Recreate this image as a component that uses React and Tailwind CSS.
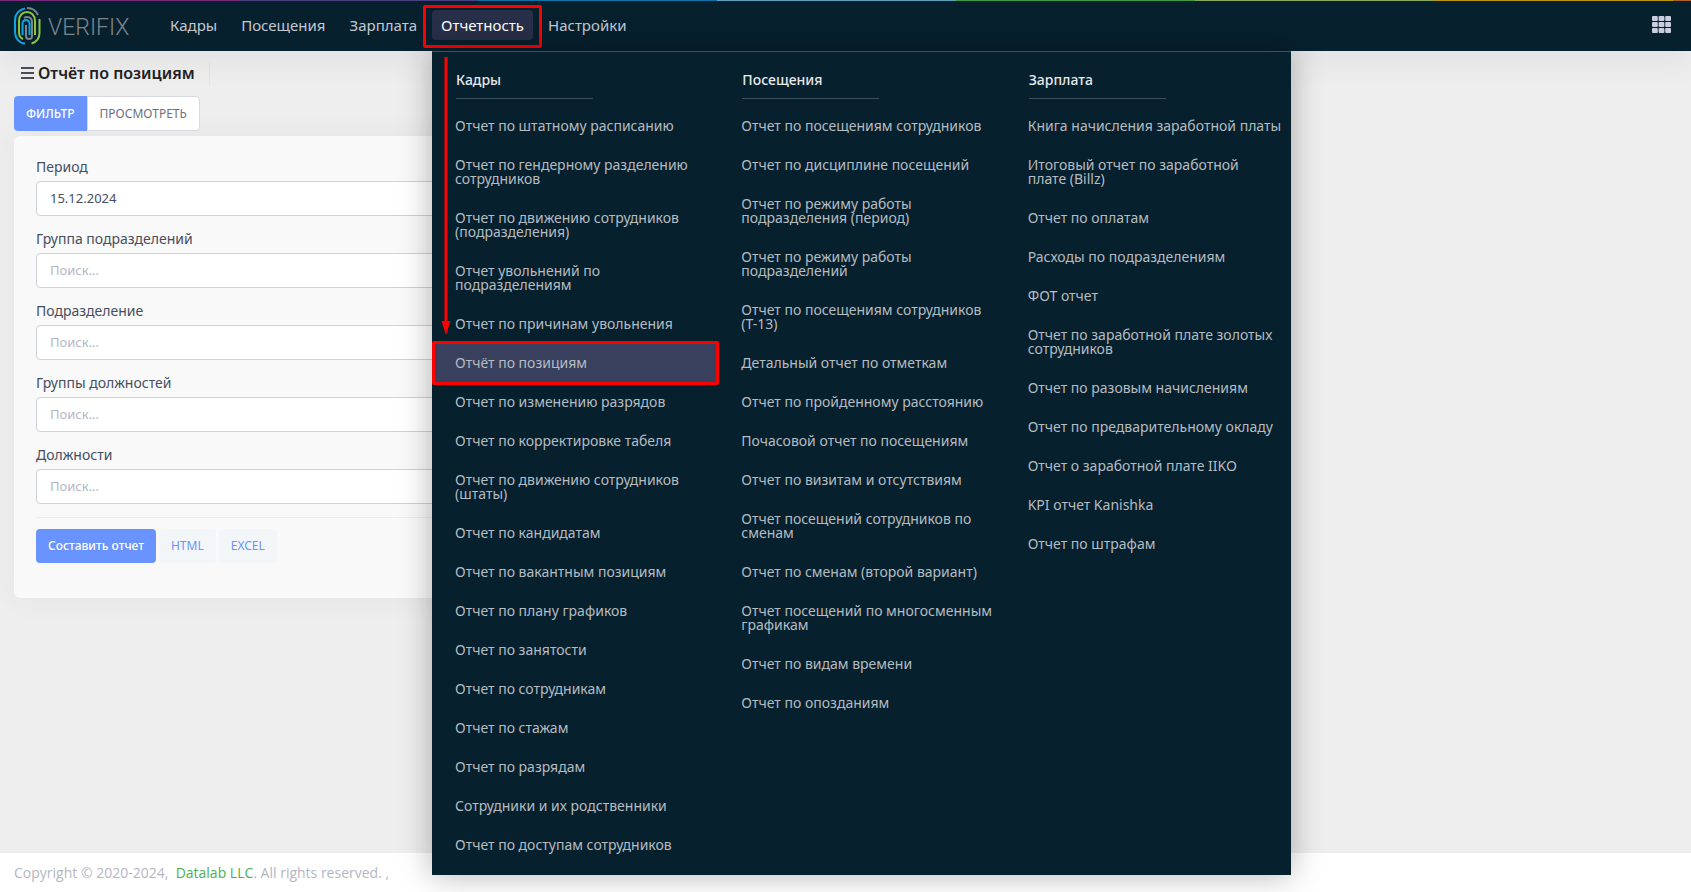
const navItems = ["Кадры", "Посещения", "Зарплата", "Отчетность", "Настройки"];
const activeNav = "Отчетность";

const stripes = [
  "bg-[#7a2a7c]",
  "bg-[#4a4082]",
  "bg-[#0a72a8]",
  "bg-[#5f9fc0]",
  "bg-[#3f9a4a]",
  "bg-[#8aa860]",
  "bg-[#b8960f]",
];

const menuColumns = [
  {
    title: "Кадры",
    items: [
      "Отчет по штатному расписанию",
      "Отчет по гендерному разделению сотрудников",
      "Отчет по движению сотрудников (подразделения)",
      "Отчет увольнений по подразделениям",
      "Отчет по причинам увольнения",
      "Отчёт по позициям",
      "Отчет по изменению разрядов",
      "Отчет по корректировке табеля",
      "Отчет по движению сотрудников (штаты)",
      "Отчет по кандидатам",
      "Отчет по вакантным позициям",
      "Отчет по плану графиков",
      "Отчет по занятости",
      "Отчет по сотрудникам",
      "Отчет по стажам",
      "Отчет по разрядам",
      "Сотрудники и их родственники",
      "Отчет по доступам сотрудников",
    ],
  },
  {
    title: "Посещения",
    items: [
      "Отчет по посещениям сотрудников",
      "Отчет по дисциплине посещений",
      "Отчет по режиму работы подразделения (период)",
      "Отчет по режиму работы подразделений",
      "Отчет по посещениям сотрудников (T-13)",
      "Детальный отчет по отметкам",
      "Отчет по пройденному расстоянию",
      "Почасовой отчет по посещениям",
      "Отчет по визитам и отсутствиям",
      "Отчет посещений сотрудников по сменам",
      "Отчет по сменам (второй вариант)",
      "Отчет посещений по многосменным графикам",
      "Отчет по видам времени",
      "Отчет по опозданиям",
    ],
  },
  {
    title: "Зарплата",
    items: [
      "Книга начисления заработной платы",
      "Итоговый отчет по заработной\nплате (Billz)",
      "Отчет по оплатам",
      "Расходы по подразделениям",
      "ФОТ отчет",
      "Отчет по заработной плате золотых сотрудников",
      "Отчет по разовым начислениям",
      "Отчет по предварительному окладу",
      "Отчет о заработной плате IIKO",
      "KPI отчет Kanishka",
      "Отчет по штрафам",
    ],
  },
];

const fields = [
  { id: "period", label: "Период", value: "15.12.2024" },
  { id: "division-group", label: "Группа подразделений" },
  { id: "division", label: "Подразделение" },
  { id: "job-group", label: "Группы должностей" },
  { id: "job", label: "Должности" },
];

function Logo() {
  return (
    <a href="#" className="flex items-center gap-[7px]" aria-label="Verifix">
      <svg width="27" height="38" viewBox="0 0 27 38" fill="none" strokeWidth="2">
        <g stroke="#0fa5e0">
          <path d="M11 1.5C5 2.500 1 7 1 13v12c0 6 4 11 10 11.500" />
          <path d="M8.500 28V16.500a3.500 3.500 0 0 1 7 0V28" />
        </g>
        <g stroke="#8cc63f">
          <path d="M9 32C6 31 5 28 5 25V14c0-12 16-12 16 0v14" />
          <path d="M25.500 12v14c0 6-3 9-8 10.500" />
        </g>
        <g stroke="#7d858c">
          <path d="M13 1c6 0 9 2.500 11 7" />
          <path d="M12 18v11c0 4 6 4 6 0V15c0-5-5-6-8-4" />
        </g>
      </svg>
      <svg width="86" height="28" viewBox="0 0 86 28" aria-hidden="true">
        <text x="0" y="23" fill="#7d858c" fontFamily="Roboto" fontWeight="300" fontSize="23">
          VERIFIX
        </text>
      </svg>
    </a>
  );
}

function AppsIcon() {
  return (
    <svg width="19" height="17" viewBox="0 0 19 17" fill="#c9cddd">
      {[0, 6, 12].map((y) =>
        [0, 6.6, 13.2].map((x) => (
          <rect key={`${x}-${y}`} x={x} y={y} width="5.8" height="5" rx="1" />
        ))
      )}
    </svg>
  );
}

function BarsIcon() {
  return (
    <svg width="13" height="12" viewBox="0 0 13 12" fill="#4a4d55">
      <rect width="13" height="2" />
      <rect y="5" width="13" height="2" />
      <rect y="10" width="13" height="2" />
    </svg>
  );
}

function ReportsMenu() {
  return (
    <div className="absolute top-full left-0 z-20 mt-[11px] grid w-[859px] grid-cols-3 border-t border-[#3b525e] bg-[#07202e] pt-[17px] pb-[10px] shadow-[0_0_30px_rgba(0,0,0,0.3)]">
      {menuColumns.map((column) => (
        <div key={column.title}>
          <h3 className="mx-6 w-[137px] border-b border-[#3b525e] pb-[7px] text-sm leading-[22px] font-medium text-[#e6e8ea]">
            {column.title}
          </h3>
          <ul className="pt-2">
            {column.items.map((item) => (
              <MenuLink key={item} text={item} />
            ))}
          </ul>
        </div>
      ))}
    </div>
  );
}

function MenuLink({ text }) {
  const selected = text === "Отчёт по позициям";

  return (
    <li className="relative">
      <a
        href="#"
        className={`block pt-3 pr-2 pb-[13px] pl-[23px] text-sm leading-[14px] whitespace-pre-line text-[#b5bcc1] ${
          selected ? "bg-[#38405e]" : ""
        }`}
      >
        {text}
      </a>
      {selected && (
        <span className="absolute -right-px left-0 -top-[3px] -bottom-0.5 rounded-xs border-3 border-[#ff0000]" />
      )}
    </li>
  );
}

function Header() {
  return (
    <header className="relative z-10 bg-[#07202e] shadow-[0_10px_30px_rgba(82,63,105,0.08)]">
      <div className="flex h-px">
        {stripes.map((stripe) => (
          <span key={stripe} className={`w-[239px] shrink-0 ${stripe}`} />
        ))}
        <span className="grow bg-[#b06020]" />
      </div>
      <div className="flex h-[50px] items-center pr-5 pl-[14px]">
        <Logo />
        <nav className="mb-0.5 ml-[27px] flex items-center gap-[6px]">
          {navItems.map((item) => (
            <div key={item} className="relative">
              <a
                href="#"
                className={`block rounded px-[9px] py-1 text-[15px] leading-[22px] ${
                  item === activeNav
                    ? "bg-[#282f48] text-white"
                    : "text-[#c3c8d2]"
                }`}
              >
                {item}
              </a>
              {item === activeNav && (
                <>
                  <span className="absolute -inset-x-[9px] -top-[5px] -bottom-2 rounded-xs border-3 border-[#ff0000]" />
                  <ReportsMenu />
                  {/* Arrow from the nav item down to the selected report */}
                  <svg
                    className="absolute top-[47px] left-[9px] z-30"
                    width="10"
                    height="278"
                    viewBox="0 0 10 278"
                    fill="#ff0000"
                  >
                    <path d="M3.500 0h3v264h3L5 278 .5 264h3z" />
                  </svg>
                </>
              )}
            </div>
          ))}
        </nav>
        <button type="button" className="mb-1 ml-auto" aria-label="Приложения">
          <AppsIcon />
        </button>
      </div>
    </header>
  );
}

function FilterForm() {
  return (
    <form className="mt-[5px] w-1/2 rounded-md bg-[#f9f9f9] px-[22px] pt-[21px] pb-[35px] shadow-[0_0_30px_rgba(82,63,105,0.06)]">
      {fields.map((field) => (
        <div key={field.id} className="mb-[13px]">
          <label
            htmlFor={field.id}
            className="block pb-1 text-sm leading-5 text-[#464e5f]"
          >
            {field.label}
          </label>
          <input
            id={field.id}
            type="text"
            defaultValue={field.value}
            placeholder="Поиск..."
            className="block h-[35px] w-full rounded border border-[#cdd1da] bg-white px-[13px] pb-0.5 text-[13px] text-[#464e5f] placeholder:text-[#b5b5c3]"
          />
        </div>
      ))}
      <div className="flex gap-[3px] border-t border-[#ebedf0] pt-[11px] text-xs">
        <button
          type="button"
          className="h-[34px] rounded bg-[#6993ff] px-3 font-medium text-white"
        >
          Составить отчет
        </button>
        <button
          type="button"
          className="h-[34px] rounded bg-[#f3f6f9] px-3 text-[#6993ff]"
        >
          HTML
        </button>
        <button
          type="button"
          className="h-[34px] rounded bg-[#f3f6f9] px-3 text-[#6993ff]"
        >
          EXCEL
        </button>
      </div>
    </form>
  );
}

function App() {
  return (
    <div className="flex min-h-screen flex-col bg-[#eeeeee] font-['Noto_Sans',sans-serif]">
      <Header />

      <main className="grow px-[14px] pt-[10px]">
        <div className="flex items-center">
          <div className="flex items-center gap-1 border-r border-[#e1e5ec] pr-[14px] pl-[7px]">
            <BarsIcon />
            <h1 className="text-base leading-6 font-semibold text-[#212121]">
              Отчёт по позициям
            </h1>
          </div>
        </div>

        <div className="mt-[11px] flex text-xs">
          <button
            type="button"
            className="h-[35px] rounded-l bg-[#6993ff] px-3 font-medium text-white"
          >
            ФИЛЬТР
          </button>
          <button
            type="button"
            className="h-[35px] rounded-r border border-[#d6d9e2] bg-white px-3 text-[#6c7080]"
          >
            ПРОСМОТРЕТЬ
          </button>
        </div>

        <FilterForm />
      </main>

      <footer className="bg-white px-[14px] pt-[10px] pb-[9px] font-['Open_Sans',sans-serif] text-sm text-[#b5b5c3]">
        Copyright © 2020-2024,&nbsp;{" "}
        <a href="#" className="text-[#4caf50]">
          Datalab LLC
        </a>
        . All rights reserved. ,
      </footer>
    </div>
  );
}

export default App;
